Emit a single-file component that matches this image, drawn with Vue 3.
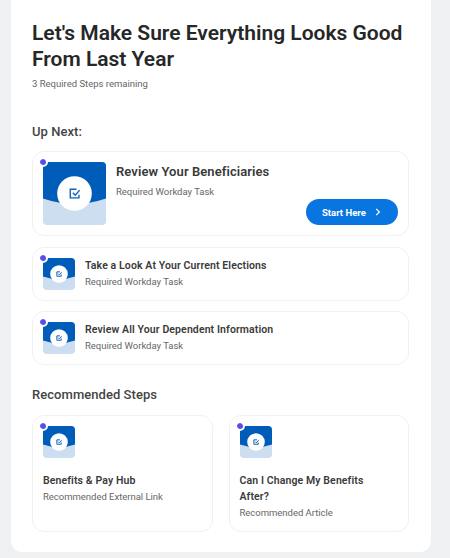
<script setup>
import { h } from 'vue'

const tasks = [
  { id: 1, title: 'Take a Look At Your Current Elections', type: 'Required Workday Task' },
  { id: 2, title: 'Review All Your Dependent Information', type: 'Required Workday Task' }
]

const recommended = [
  { id: 3, title: 'Benefits & Pay Hub', type: 'Recommended External Link' },
  { id: 4, title: 'Can I Change My Benefits After?', type: 'Recommended Article' }
]

// blue tile with the task checkbox, the size and corners come from the class
const TaskThumb = () => h('svg', { viewBox: '0 0 64 64' }, [
  h('rect', { width: 64, height: 64, fill: '#cddef0' }),
  h('path', { d: 'M0 0H64V37Q32 48 0 37Z', fill: '#005cb9' }),
  h('circle', { cx: 32, cy: 32, r: 17.6, fill: '#fff' }),
  h('path', {
    d: 'M34 27.7H27.7V36.5H36.5V33.3M30.3 31.3L32.8 33.8L37.2 28.6',
    fill: 'none',
    stroke: '#0b63bd'
  })
])
</script>

<template>
  <main class="panel">
    <h1>Let's Make Sure Everything Looks Good From Last Year</h1>
    <p class="remaining">3 Required Steps remaining</p>

    <h2>Up Next:</h2>
    <section class="card featured">
      <div class="thumb large"><TaskThumb class="pic" /><span class="dot"></span></div>
      <div class="text">
        <h3>Review Your Beneficiaries</h3>
        <p>Required Workday Task</p>
      </div>
      <button class="start">
        <span>Start Here</span>
        <svg viewBox="0 0 6 8"><path d="M1.2 0.8L4.4 4L1.2 7.2" /></svg>
      </button>
    </section>

    <section v-for="item in tasks" :key="item.id" class="card task">
      <div class="thumb"><TaskThumb class="pic" /><span class="dot"></span></div>
      <div class="text">
        <h3>{{ item.title }}</h3>
        <p>{{ item.type }}</p>
      </div>
    </section>

    <h2 class="recommended">Recommended Steps</h2>
    <div class="grid">
      <section v-for="item in recommended" :key="item.id" class="card tile">
        <div class="thumb"><TaskThumb class="pic" /><span class="dot"></span></div>
        <div class="text">
          <h3>{{ item.title }}</h3>
          <p>{{ item.type }}</p>
        </div>
      </section>
    </div>
  </main>
</template>

<style>
body {
  background: #eff0f2;
}
</style>

<style scoped>
.panel {
  box-sizing: border-box;
  width: 420px;
  height: 552px;
  margin-left: 11px;
  padding: 20px 22px 0 21px;
  border-radius: 0 0 11px 11px;
  background: #fff;
  color: #333;
  font-family: Roboto, "Liberation Sans", sans-serif;
}

h1, h2, h3, p {
  margin: 0;
}

h1 {
  color: #272727;
  font-size: 21px;
  font-weight: 600;
  line-height: 26px;
}

.remaining {
  margin-top: 5px;
  color: #666;
  font-size: 9.5px;
  line-height: 13px;
}

h2 {
  margin: 33px 0 10px;
  color: #444;
  font-size: 13px;
  font-weight: 500;
  line-height: 18px;
  letter-spacing: 0.05px;
}

h2.recommended {
  margin: 21px 0 11px;
}

.card {
  box-sizing: border-box;
  display: flex;
  border: 1px solid #f1f1f1;
  border-radius: 12px;
  padding: 10px;
}

.featured {
  height: 85px;
}

.task {
  height: 54px;
  margin-top: 10px;
}

.featured + .task {
  margin-top: 11px;
}

.thumb {
  position: relative;
  flex: none;
  width: 32px;
  height: 32px;
}

.pic {
  display: block;
  width: 100%;
  height: 100%;
  border-radius: 4px;
  stroke-width: 2;
}

.large {
  width: 63px;
  height: 63px;
}

.large .pic {
  stroke-width: 1.4;
}

.dot {
  position: absolute;
  top: -5px;
  left: -5px;
  width: 6px;
  height: 6px;
  border: 2px solid #fff;
  border-radius: 50%;
  background: #5b4be8;
  background-clip: padding-box;
}

.text {
  margin-left: 10px;
}

h3 {
  color: #3a3a3a;
  font-size: 10.5px;
  font-weight: 600;
  line-height: 16px;
  letter-spacing: 0.11px;
}

.text p {
  color: #666;
  font-size: 9.5px;
  line-height: 16px;
  letter-spacing: -0.02px;
}

.featured h3 {
  font-size: 13px;
  line-height: 19px;
  letter-spacing: 0.08px;
}

.featured p {
  margin-top: 3px;
}

.start {
  display: flex;
  align-items: center;
  align-self: flex-end;
  width: 92px;
  height: 26px;
  margin-left: auto;
  padding: 0 17px 0 16px;
  border: 0;
  border-radius: 13px;
  background: #0875e1;
  color: #fff;
  font: 700 9.5px Roboto, sans-serif;
  white-space: nowrap;
}

.start svg {
  width: 6px;
  height: 8px;
  margin-left: auto;
  fill: none;
  stroke: #fff;
  stroke-width: 1.2;
}

.grid {
  display: grid;
  grid-template-columns: 1fr 1fr;
  gap: 16px;
}

.tile {
  flex-direction: column;
  height: 117px;
}

.tile .text {
  max-width: 140px;
  margin: 15px 0 0;
}
</style>
